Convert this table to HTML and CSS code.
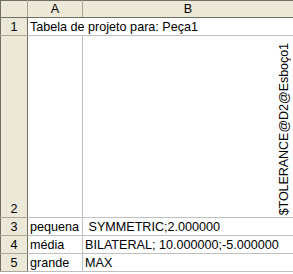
FILE: index.html
```html
<!DOCTYPE html>
<html lang="pt">
<head>
  <meta charset="UTF-8" />
  <title>Tabela de projeto</title>
  <link rel="stylesheet" href="styles.css">
</head>
<body>
  <table class="sheet">
    <colgroup>
      <col class="col-num" />
      <col class="col-a" />
      <col class="col-b" />
    </colgroup>
    <tr class="head">
      <th class="corner"></th>
      <th>A</th>
      <th>B</th>
    </tr>
    <tr>
      <th class="num">1</th>
      <td colspan="2">Tabela de projeto para: Peça1</td>
    </tr>
    <tr class="tall">
      <th class="num">2</th>
      <td></td>
      <td class="vert-cell"><span class="vert">$TOLERANCE@D2@Esboço1</span></td>
    </tr>
    <tr>
      <th class="num">3</th>
      <td>pequena</td>
      <td>&nbsp;SYMMETRIC;2.000000</td>
    </tr>
    <tr>
      <th class="num">4</th>
      <td>média</td>
      <td>BILATERAL; 10.000000;-5.000000</td>
    </tr>
    <tr>
      <th class="num">5</th>
      <td>grande</td>
      <td>MAX</td>
    </tr>
  </table>
</body>
</html>
```

FILE: styles.css
```css
* {
  box-sizing: border-box;
}
body {
  margin: 0;
  background: #fff;
  font-family: "Liberation Sans", Arial, sans-serif;
  font-size: 12.6px;
  color: #000;
}
.sheet {
  border-collapse: collapse;
  table-layout: fixed;
  width: 293px;
}
.col-num { width: 27px; }
.col-a { width: 55px; }
.col-b { width: 211px; }
th {
  background: #ece9d8;
  font-weight: normal;
  padding: 0;
  border: 1px solid #aca899;
}
.head th {
  height: 17px;
  border-top: 1px solid #716f64;
  border-bottom: 1px solid #716f64;
  line-height: 15px;
}
th.num {
  border-right: 1px solid #716f64;
  border-left: 1px solid #716f64;
}
.head .corner {
  border-left: 1px solid #716f64;
}
td {
  height: 18px;
  padding: 0 2px;
  border: 1px solid #c0c0c0;
  white-space: nowrap;
  overflow: hidden;
  line-height: 16px;
  vertical-align: bottom;
}
.tall td, .tall th {
  height: 182px;
}
.tall th {
  vertical-align: bottom;
  line-height: 16px;
}
.vert-cell {
  text-align: right;
  position: relative;
}
.vert {
  position: absolute;
  right: 2px;
  bottom: 2px;
  writing-mode: vertical-rl;
  transform: rotate(180deg);
  line-height: 13px;
  letter-spacing: -0.1px;
}
```
